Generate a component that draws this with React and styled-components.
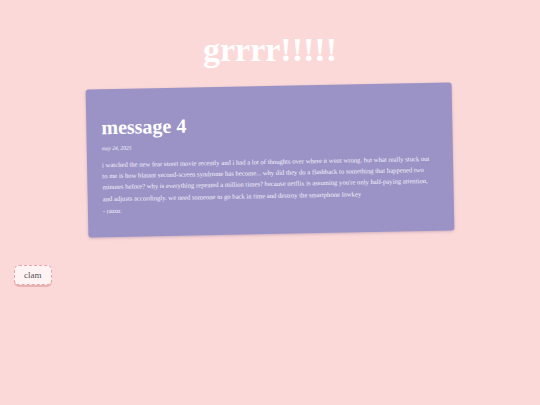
import React from 'react'
import styled, { createGlobalStyle } from 'styled-components'

const Global = createGlobalStyle`
  html, body {
    margin: 0;
    padding: 0;
    background: #fcd9d9;
    font-family: "Liberation Serif", "Times New Roman", serif;
  }
`

const Page = styled.div`
  min-height: 405px;
  padding: 30px 14px 20px;
  box-sizing: border-box;
`

const Title = styled.h1`
  margin: 0;
  text-align: center;
  color: #ffffff;
  font-size: 34px;
  line-height: 40px;
  font-weight: bold;
`

const Card = styled.div`
  width: 366px;
  box-sizing: border-box;
  margin: 16px auto 0;
  padding: 26px 19px 21px 15px;
  background: #9b93c6;
  border-radius: 3px;
  box-shadow: 0 1px 3px rgba(120, 100, 140, 0.35);
  color: #ffffff;
  transform: rotate(-1.1deg);
`

const MsgTitle = styled.h2`
  margin: 0;
  font-size: 20px;
  line-height: 24px;
  font-weight: bold;
`

const PostDate = styled.div`
  margin-top: 6px;
  font-size: 5.5px;
  font-style: italic;
  opacity: 0.9;
`

const Body = styled.p`
  margin: 8px 0 0;
  font-size: 6.65px;
  line-height: 11.2px;
  color: #f4f1fb;
`

const Sign = styled.p`
  margin: 1px 0 0;
  font-size: 6.65px;
  line-height: 11.2px;
  color: #f4f1fb;
`

const Button = styled.button`
  display: block;
  margin-top: 31px;
  padding: 0 9px;
  height: 20px;
  background: #fff3f3;
  border: 1.5px dashed #e8a3a8;
  border-radius: 5px;
  box-shadow: 0 2px 0 #e9b3b6;
  font-family: "Liberation Serif", "Times New Roman", serif;
  font-size: 9px;
  color: #555;
  cursor: pointer;
`

export default function App() {
  return (
    <>
      <Global />
      <Page>
        <Title>grrrr!!!!!</Title>
        <Card>
          <MsgTitle>message 4</MsgTitle>
          <PostDate>may 24, 2025</PostDate>
          <Body>
            i watched the new fear street movie recently and i had a lot of thoughts over where it went wrong. but what really stuck out to me is how blatant second-screen syndrome has become... why did they do a flashback to something that happened two minutes before? why is everything repeated a million times? because netflix is assuming you're only half-paying attention, and adjusts accordingly. we need someone to go back in time and destroy the smartphone lowkey
          </Body>
          <Sign>- razor.</Sign>
        </Card>
        <Button>clam</Button>
      </Page>
    </>
  )
}
